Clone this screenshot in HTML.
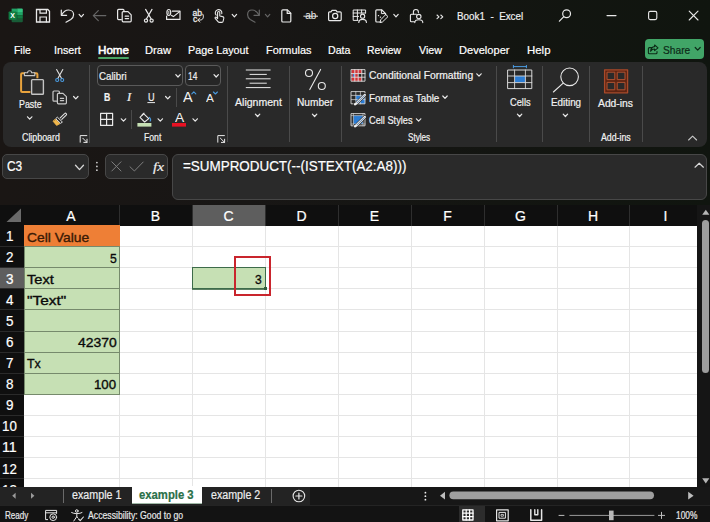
<!DOCTYPE html>
<html><head><meta charset="utf-8"><title>Book1 - Excel</title>
<style>
*{box-sizing:border-box;margin:0;padding:0}
html,body{width:710px;height:522px;overflow:hidden;background:#151515}
body{position:relative;font-family:"Liberation Sans",sans-serif;color:#fff;font-size:11px}
.abs,.t{position:absolute}
.t{white-space:nowrap;line-height:1;-webkit-text-stroke:0.2px currentColor}
svg{position:absolute;overflow:visible;left:0;top:0}
svg text{font-family:"Liberation Sans",sans-serif}
.sep{position:absolute;width:1px;background:#4a4a4a}
#grid{position:absolute;left:0;top:205px;width:697px;height:282px;background:#fff;overflow:hidden}
.ch{position:absolute;top:0;height:21px;color:#fff;font-size:14.5px;text-align:center;line-height:22px}
.rh{position:absolute;left:0;width:19px;color:#fff;font-size:14.5px;text-align:center;line-height:22px;height:21px}
.vl{position:absolute;top:20px;width:1px;height:270px;background:#e3e3e3}
.hl{position:absolute;left:24px;height:1px;width:680px;background:#e3e3e3}
.cell{position:absolute;font-size:14.5px;line-height:22px;color:#0a0a0a;padding:0 3px;white-space:nowrap}
.g{background:#c6e0b4;border:1px solid #93aa84}
.r{text-align:right}
</style></head><body>
<div class="abs" style="left:0;top:0;width:710px;height:205px;background:linear-gradient(90deg,#1a1614 0%,#181615 35%,#131511 70%,#10150f 100%)"></div>
<svg width="710" height="36" viewBox="0 0 710 36" fill="none" stroke="#e9e9e9" stroke-width="1.2" stroke-linecap="round" stroke-linejoin="round">
<g stroke="none">
<path d="M11.6,8.6 H17.2 V12 H11.6 Z" fill="#21a366"/><path d="M17.2,8.6 H21.8 a1,1 0 0 1 1,1 V12 H17.2 Z" fill="#33c481"/>
<rect x="11.6" y="12" width="5.6" height="3.4" fill="#107c41"/><rect x="17.2" y="12" width="5.6" height="3.4" fill="#21a366"/>
<rect x="11.6" y="15.4" width="5.6" height="3.4" fill="#185c37"/><rect x="17.2" y="15.4" width="5.6" height="3.4" fill="#107c41"/>
<path d="M11.6,18.8 H22.8 V21.2 a1,1 0 0 1 -1,1 H12.6 a1,1 0 0 1 -1,-1 Z" fill="#185c37"/>
<rect x="8.6" y="11.4" width="8" height="8.4" rx="0.8" fill="#107c41"/>
<text x="12.6" y="18.2" font-size="7" font-weight="bold" fill="#fff" text-anchor="middle">X</text></g>
<path d="M36.5,9.5 H47.8 L49.5,11.2 V22 H36.5 Z" stroke-width="1.3" stroke-linejoin="miter"/><path d="M40,9.5 V13.2 H46.4 V9.5 M40,22 V17 H46.4 V22" stroke-width="1.2" stroke-linejoin="miter"/>
<path d="M61.3,10 V15.3 H66.6"/><path d="M61.6,15 C63.2,12 65.6,10 68.6,10 C71.6,10 73.6,12.2 73.6,14.8 C73.6,17 72.4,18.4 70.8,19.4 L66,22.2"/>
<path d="M79.1,14.4 L81.3,16.8 L83.5,14.4" fill="none" stroke="#e9e9e9" stroke-width="1.2" stroke-linecap="round" stroke-linejoin="round"/>
<path d="M93.3,15.6 H105.8 M98.3,10.6 L93.3,15.6 L98.3,20.6" stroke="#666"/>
<path d="M121.3,19.6 H118.6 a1,1 0 0 1 -1,-1 V10.4 a1,1 0 0 1 1,-1 H123 a1,1 0 0 1 1,1 V11.4"/><path d="M122.2,12.6 a1,1 0 0 1 1,-1 H128 L131.2,14.8 V20.8 a1,1 0 0 1 -1,1 H123.2 a1,1 0 0 1 -1,-1 Z"/><path d="M125.2,16.2 H128.6 M125.2,18.6 H128.6"/>
<path d="M145.6,9.4 L151.2,19 M152,9.4 L146.4,19"/><circle cx="146" cy="20.6" r="1.6"/><circle cx="151.6" cy="20.6" r="1.6"/>
<path d="M172.4,11.2 H180 V19.4 H166.6 V16.2"/><path d="M171.6,15.4 L173.4,16.6 L179.6,11.6"/><ellipse cx="168.8" cy="12.5" rx="1.9" ry="3" stroke-width="1.2" fill="#171615"/><path d="M168.8,11.4 V13.8" stroke-width="0.9"/>
<text x="192.6" y="15.8" font-size="8.6" fill="#e9e9e9" stroke="#e9e9e9" stroke-width="0.3">ab</text><text x="193" y="21.6" font-size="8.6" fill="#e9e9e9" stroke="#e9e9e9" stroke-width="0.3">c</text>
<path d="M202.8,14.2 C204.2,17 203.2,20 200.2,20 H198 M199.8,18 L197.8,20 L199.8,22" stroke-width="1"/>
<path d="M216.2,15.2 a3.3,3.3 0 1 1 5.6,-1.6" stroke-width="1.1"/><path d="M217.6,18.6 V12.6 a1.1,1.1 0 0 1 2.2,0 V16 L222.6,16.6 a1.4,1.4 0 0 1 1.2,1.6 L223.2,21 a1.6,1.6 0 0 1 -1.6,1.4 H219.6 a2,2 0 0 1 -1.6,-0.8 L215.2,18.4 a0.9,0.9 0 0 1 1.4,-1.1 Z" stroke-width="1.1"/>
<path d="M232.2,14.4 L234.4,16.8 L236.6,14.4" fill="none" stroke="#e9e9e9" stroke-width="1.2" stroke-linecap="round" stroke-linejoin="round"/>
<path d="M259.3,10 V15.3 H254" stroke="#666"/><path d="M259,15 C257.4,12 255,10 252,10 C249,10 247.6,12.2 247.6,14.8 C247.6,17 248.6,18.4 250.2,19.4 L255,22.2" stroke="#666"/>
<path d="M265.4,14.4 L267.6,16.8 L269.8,14.4" fill="none" stroke="#666" stroke-width="1.2" stroke-linecap="round" stroke-linejoin="round"/>
<path d="M281.8,10.8 a1,1 0 0 1 1,-1 H287.4 L290.8,13.2 V21 a1,1 0 0 1 -1,1 H282.8 a1,1 0 0 1 -1,-1 Z"/><path d="M287.2,10 V13.4 H290.6"/>
<text x="305.2" y="19.4" font-size="10" fill="#e9e9e9" stroke="none">ab</text><path d="M303.8,16.2 H317.6" stroke-width="1"/>
<path d="M328.6,12.8 a1,1 0 0 1 1,-1 H331 L332,10.4 H336 L337,11.8 H340.2 a1,1 0 0 1 1,1 V19.6 a1,1 0 0 1 -1,1 H329.6 a1,1 0 0 1 -1,-1 Z"/><circle cx="335.2" cy="16" r="2.6"/>
<path d="M358,20.4 H353.2 V10 H365.6 V13 M353.2,13 H365.6 M353.2,16.4 H358.6 M357.4,10 V20.4 M361.6,10 V13" stroke-width="1"/><circle cx="362.6" cy="16.2" r="2.1" stroke-width="1.1"/><path d="M358.8,22.4 C358.8,20 360.4,19.4 362.6,19.4 C364.8,19.4 366.4,20 366.4,22.4" stroke-width="1.1"/>
<path d="M381,22 H376.8 a1,1 0 0 1 -1,-1 V10.8 a1,1 0 0 1 1,-1 H381.6 L385.6,13.6 V14.6"/><path d="M381.4,10 V13.6 H385.2" stroke-width="1"/><path d="M386,14.8 L388,16.6 L382.4,22 L380,22.6 L380.6,20.2 Z" stroke-width="1"/><path d="M378.4,15.6 h0.2 M380.4,17.2 h0.2" stroke-width="1.2"/>
<path d="M393.8,14.4 L396.0,16.8 L398.2,14.4" fill="none" stroke="#e9e9e9" stroke-width="1.2" stroke-linecap="round" stroke-linejoin="round"/>
<path d="M413.4,14.2 V12 a2.5,2.5 0 0 1 5,0 V12.6" stroke-width="1.1"/><path d="M414.6,21.8 H411.4 a1,1 0 0 1 -1,-1 V15.2 a1,1 0 0 1 1,-1 H416.4" stroke-width="1.1"/><circle cx="418.8" cy="16.6" r="2.2" stroke-width="1.1"/><path d="M414.8,22.6 C414.8,20.2 416.4,19.8 418.8,19.8 C421.2,19.8 422.8,20.2 422.8,22.6" stroke-width="1.1"/>
<path d="M437,15 L439,16.8 L437,18.6 M440.8,15 L442.8,16.8 L440.8,18.6" stroke-width="1.1"/>
<circle cx="566.6" cy="13.8" r="3.9"/><path d="M563.8,16.6 L559.4,21.2"/>
<path d="M607,15.6 H616" stroke-width="1.1"/><rect x="648.6" y="11.4" width="8.2" height="8.2" rx="1.6" stroke-width="1.1"/><path d="M689.2,11.2 L698,20 M698,11.2 L689.2,20" stroke-width="1.1"/>
</svg>
<div class="t" style="left:457.0px;top:11px;font-size:11.5px;color:#f0f0f0;transform:scaleX(0.856);transform-origin:0 0">Book1&nbsp; - &nbsp;Excel</div>
<div class="t" style="left:13.5px;top:45px;font-size:11.5px;color:#fff;transform:scaleX(0.907);transform-origin:0 0">File</div>
<div class="t" style="left:53.5px;top:45px;font-size:11.5px;color:#fff;transform:scaleX(0.932);transform-origin:0 0">Insert</div>
<div class="t" style="left:98.0px;top:45px;font-size:11.5px;color:#fff;transform:scaleX(1.010);transform-origin:0 0;-webkit-text-stroke:0.55px currentColor">Home</div>
<div class="t" style="left:145.0px;top:45px;font-size:11.5px;color:#fff;transform:scaleX(0.969);transform-origin:0 0">Draw</div>
<div class="t" style="left:187.5px;top:45px;font-size:11.5px;color:#fff;transform:scaleX(0.937);transform-origin:0 0">Page Layout</div>
<div class="t" style="left:265.5px;top:45px;font-size:11.5px;color:#fff;transform:scaleX(0.949);transform-origin:0 0">Formulas</div>
<div class="t" style="left:327.5px;top:45px;font-size:11.5px;color:#fff;transform:scaleX(0.926);transform-origin:0 0">Data</div>
<div class="t" style="left:367.0px;top:45px;font-size:11.5px;color:#fff;transform:scaleX(0.901);transform-origin:0 0">Review</div>
<div class="t" style="left:418.5px;top:45px;font-size:11.5px;color:#fff;transform:scaleX(0.930);transform-origin:0 0">View</div>
<div class="t" style="left:458.5px;top:45px;font-size:11.5px;color:#fff;transform:scaleX(0.963);transform-origin:0 0">Developer</div>
<div class="t" style="left:526.5px;top:45px;font-size:11.5px;color:#fff;transform:scaleX(0.993);transform-origin:0 0">Help</div>
<div class="abs" style="left:98px;top:57px;width:31px;height:2px;background:#4aa564;border-radius:1px"></div>
<div class="abs" style="left:645px;top:39px;width:59px;height:20px;background:#41a567;border-radius:4px"></div>
<svg width="710" height="64" viewBox="0 0 710 64" fill="none" stroke="#0c2a17" stroke-width="1.1" stroke-linecap="round" stroke-linejoin="round"><path d="M652,47.6 H649.4 a1,1 0 0 0 -1,1 V52.8 a1,1 0 0 0 1,1 H656 a1,1 0 0 0 1,-1 V51.6"/><path d="M654.6,45 L658,47.8 L654.6,50.6 V49 C652.6,49 651.4,49.8 650.6,51.2 C650.8,48.6 652.2,46.8 654.6,46.6 Z"/><path d="M695.2,47.5 L697.7,50.1 L700.2,47.5" fill="none" stroke="#0c2a17" stroke-width="1.2" stroke-linecap="round" stroke-linejoin="round"/>
</svg>
<div class="t" style="left:662.8px;top:45px;font-size:11.5px;color:#0c2a17;transform:scaleX(0.886);transform-origin:0 0">Share</div>
<div class="abs" style="left:3px;top:62px;width:704px;height:85px;background:#292929;border-radius:8px"></div>
<div class="sep" style="left:89.0px;top:65px;height:78px"></div>
<div class="sep" style="left:227.0px;top:66px;height:76px"></div>
<div class="sep" style="left:289.0px;top:66px;height:76px"></div>
<div class="sep" style="left:341.0px;top:66px;height:76px"></div>
<div class="sep" style="left:496.0px;top:66px;height:76px"></div>
<div class="sep" style="left:542.0px;top:66px;height:76px"></div>
<div class="sep" style="left:589.0px;top:66px;height:76px"></div>
<div class="sep" style="left:642.0px;top:66px;height:76px"></div>
<div class="sep" style="left:176px;top:88px;height:19px"></div>
<div class="sep" style="left:131px;top:110px;height:19px"></div>
<div class="abs" style="left:97px;top:65px;width:86px;height:21px;border:1px solid #5a5a5a;border-radius:4px;background:#262626"></div>
<div class="abs" style="left:184.5px;top:65px;width:36.5px;height:21px;border:1px solid #5a5a5a;border-radius:4px;background:#262626"></div>
<svg width="710" height="150" viewBox="0 0 710 150" fill="none" stroke="#e9e9e9" stroke-width="1.2" stroke-linecap="round" stroke-linejoin="round">
<path d="M26,73.2 H22.1 a1,1 0 0 0 -1,1 V91.1 a1,1 0 0 0 1,1 H30.4 M33.6,73.2 H36.4 a1,1 0 0 1 1,1 V78.2" stroke="#e8a33d" stroke-width="2" stroke-linecap="butt"/>
<path d="M24.4,75.6 V72.8 H27.6 a2,2 0 0 1 4,0 H34.8 V75.6 Z" stroke="#c8c8c8" stroke-width="1.1" fill="#292929"/>
<rect x="31.6" y="79.6" width="11.8" height="14.6" rx="0.8" stroke="#c4c4c4" stroke-width="1.4" fill="#303030"/>
<path d="M27.5,116.8 L29.7,119.1 L31.9,116.8" fill="none" stroke="#e9e9e9" stroke-width="1.2" stroke-linecap="round" stroke-linejoin="round"/>
<path d="M56.6,69.6 L61.6,78.4 M62.8,69.6 L57.8,78.4" stroke="#e0e0e0" stroke-width="1.1"/><circle cx="57.2" cy="80" r="1.5" stroke="#4a9be0" stroke-width="1.1"/><circle cx="62.2" cy="80" r="1.5" stroke="#4a9be0" stroke-width="1.1"/>
<path d="M56.6,101.2 H54 a1,1 0 0 1 -1,-1 V92 a1,1 0 0 1 1,-1 H58.4 a1,1 0 0 1 1,1 V93" stroke="#c8c8c8"/><path d="M57.4,94.4 a1,1 0 0 1 1,-1 H63 L66.4,96.6 V102.8 a1,1 0 0 1 -1,1 H58.4 a1,1 0 0 1 -1,-1 Z" stroke="#c8c8c8"/><path d="M60.4,98.4 H63.6 M60.4,100.6 H63.6" stroke="#c8c8c8"/>
<path d="M73.6,96.5 L75.8,98.9 L78.0,96.5" fill="none" stroke="#e9e9e9" stroke-width="1.2" stroke-linecap="round" stroke-linejoin="round"/>
<path d="M60.2,117.8 L64.6,113.6 a1.1,1.1 0 0 1 1.6,1.6 L61.8,119.4" stroke="#e0e0e0" stroke-width="1.1"/><path d="M57.6,117.4 L62.4,122 L60.6,123.4 L56,119 Z" stroke="#e0e0e0" stroke-width="1"/><path d="M55.4,119.4 L59.8,123.8 L56.6,125.4 L53.2,121.4 Z" fill="#f0b64a" stroke="#f0b64a" stroke-width="0.8"/>
<path d="M86.8,135.6 H80.2 V142.2" stroke-width="1"/><path d="M82.8,138.2 L87.0,142.4 M83.8,142.4 H87.0 V139.2" stroke-width="1"/>
<path d="M224.4,135.6 H217.8 V142.2" stroke-width="1"/><path d="M220.4,138.2 L224.60000000000002,142.4 M221.4,142.4 H224.60000000000002 V139.2" stroke-width="1"/>
<path d="M175.8,74.6 L178.0,77.0 L180.2,74.6" fill="none" stroke="#e9e9e9" stroke-width="1.2" stroke-linecap="round" stroke-linejoin="round"/>
<path d="M214.0,74.6 L216.2,77.0 L218.4,74.6" fill="none" stroke="#e9e9e9" stroke-width="1.2" stroke-linecap="round" stroke-linejoin="round"/>
<path d="M147.8,102.6 H154.6" stroke-width="1"/>
<path d="M165.6,96.5 L167.8,98.9 L170.0,96.5" fill="none" stroke="#e9e9e9" stroke-width="1.2" stroke-linecap="round" stroke-linejoin="round"/>
<path d="M191.8,93.8 L193.8,91.8 L195.8,93.8" stroke="#4a9be0" stroke-width="1.1"/><path d="M213.4,92 L215.4,94 L217.4,92" stroke="#4a9be0" stroke-width="1.1"/>
<rect x="100.6" y="113.4" width="12" height="12" stroke-width="1.2"/><path d="M106.6,113.4 V125.4 M100.6,119.4 H112.6" stroke-width="1.2"/>
<path d="M121.3,118.8 L123.5,121.1 L125.7,118.8" fill="none" stroke="#e9e9e9" stroke-width="1.2" stroke-linecap="round" stroke-linejoin="round"/>
<path d="M143.6,113.6 L148.8,118.6 L144.6,122 L140,117.4 Z" stroke-width="1.1"/><path d="M142.2,115 L144,113.2" stroke-width="1.1"/><path d="M149.4,117.4 C150.6,118.8 151,120 150.2,121 " stroke="#4a9be0" stroke-width="1.2"/>
<rect x="137.4" y="123" width="14" height="3.6" fill="#c6e0b4" stroke="none"/>
<path d="M158.1,118.8 L160.3,121.1 L162.5,118.8" fill="none" stroke="#e9e9e9" stroke-width="1.2" stroke-linecap="round" stroke-linejoin="round"/>
<rect x="172" y="123" width="14" height="3.6" fill="#e81123" stroke="none"/>
<path d="M193.0,118.8 L195.2,121.1 L197.4,118.8" fill="none" stroke="#e9e9e9" stroke-width="1.2" stroke-linecap="round" stroke-linejoin="round"/>
<path d="M246.2,70 H270.2 M250,74.4 H266.4 M246.2,78.8 H270.2 M250,83.2 H266.4 M246.2,87.6 H270.2" stroke-width="1"/>
<path d="M255.4,114.1 L257.6,116.5 L259.8,114.1" fill="none" stroke="#e9e9e9" stroke-width="1.2" stroke-linecap="round" stroke-linejoin="round"/>
<circle cx="309" cy="73" r="3.5" stroke-width="1.1"/><circle cx="321.8" cy="86" r="3.5" stroke-width="1.1"/><path d="M320.6,69.4 L309.8,89.6" stroke-width="1.1"/>
<path d="M312.4,114.1 L314.6,116.5 L316.8,114.1" fill="none" stroke="#e9e9e9" stroke-width="1.2" stroke-linecap="round" stroke-linejoin="round"/>
<rect x="351.4" y="69.6" width="10.4" height="11.6" fill="#d13438" stroke="none"/><rect x="358.2" y="73.6" width="3.6" height="3.4" fill="#222" stroke="none"/><rect x="352.79999999999995" y="73.6" width="2" height="3.4" fill="#3a78c9" stroke="none"/><rect x="351.4" y="69.6" width="13.6" height="11.6" stroke="#d8d8d8" stroke-width="0.9"/><path d="M354.79999999999995,69.6 V81.19999999999999 M358.2,69.6 V81.19999999999999 M361.79999999999995,69.6 V81.19999999999999 M351.4,73.6 H365.0 M351.4,77.19999999999999 H365.0" stroke="#e0e0e0" stroke-width="0.9"/>
<rect x="355.79999999999995" y="95.39999999999999" width="9.2" height="8.4" fill="#2b7cd3" stroke="none"/><rect x="351.4" y="91.6" width="13.6" height="12.2" stroke="#d8d8d8" stroke-width="0.9"/><path d="M355.79999999999995,91.6 V103.8 M360.4,91.6 V103.8 M351.4,95.39999999999999 H365.0 M351.4,99.6 H365.0" stroke="#d8d8d8" stroke-width="0.7"/><path d="M364.79999999999995,95.0 L356.59999999999997,103.19999999999999 L355.0,104.19999999999999" stroke="#2a2a2a" stroke-width="3.6"/><path d="M364.79999999999995,95.0 L356.59999999999997,103.19999999999999 L355.0,104.19999999999999" stroke="#f0f0f0" stroke-width="2.4"/><path d="M364.2,95.6 L357.0,102.8" stroke="#2d5f9a" stroke-width="0.8"/>
<rect x="353.4" y="115.6" width="9.6" height="8.4" fill="#2b7cd3" stroke="none"/><rect x="351.4" y="113.6" width="13.6" height="12.2" stroke="#d8d8d8" stroke-width="0.9"/><path d="M353.4,113.6 V125.8 M363.0,113.6 V125.8 M351.4,115.6 H365.0 M351.4,124.0 H365.0" stroke="#d8d8d8" stroke-width="0.6"/><path d="M364.79999999999995,117.0 L356.59999999999997,125.19999999999999 L355.0,126.19999999999999" stroke="#2a2a2a" stroke-width="3.6"/><path d="M364.79999999999995,117.0 L356.59999999999997,125.19999999999999 L355.0,126.19999999999999" stroke="#f0f0f0" stroke-width="2.4"/><path d="M364.2,117.6 L357.0,124.8" stroke="#2d5f9a" stroke-width="0.8"/>
<path d="M476.8,73.8 L479.0,76.2 L481.2,73.8" fill="none" stroke="#e9e9e9" stroke-width="1.2" stroke-linecap="round" stroke-linejoin="round"/>
<path d="M442.8,96.0 L445.0,98.4 L447.2,96.0" fill="none" stroke="#e9e9e9" stroke-width="1.2" stroke-linecap="round" stroke-linejoin="round"/>
<path d="M416.4,118.8 L418.6,121.1 L420.8,118.8" fill="none" stroke="#e9e9e9" stroke-width="1.2" stroke-linecap="round" stroke-linejoin="round"/>
<rect x="514.6" y="76" width="10.8" height="6.6" fill="#2b7cd3" stroke="none"/><rect x="508" y="70" width="23.8" height="18.6" stroke="#d8d8d8" stroke-width="1"/><path d="M514.6,70 V88.6 M525.4,70 V88.6 M508,76 H531.8 M508,82.6 H531.8" stroke="#d8d8d8" stroke-width="0.9"/><path d="M513.4,66.6 H526.4 M513.4,65.4 V67.8 M526.4,65.4 V67.8" stroke="#4a9be0" stroke-width="1"/>
<path d="M517.4,114.1 L519.6,116.5 L521.8,114.1" fill="none" stroke="#e9e9e9" stroke-width="1.2" stroke-linecap="round" stroke-linejoin="round"/>
<circle cx="569.6" cy="76.8" r="8.8" stroke-width="1.1"/><path d="M563.2,83.2 L553.4,92" stroke-width="1.1"/>
<path d="M563.2,114.1 L565.4,116.5 L567.6,114.1" fill="none" stroke="#e9e9e9" stroke-width="1.2" stroke-linecap="round" stroke-linejoin="round"/>
<rect x="604.6" y="69.8" width="23" height="23" fill="#5e2412" stroke="#a94a2a" stroke-width="1.3"/><rect x="607.4" y="72.2" width="7.4" height="7.4" fill="#2a2a2a" stroke="#b05332" stroke-width="1"/><rect x="607.4" y="82.4" width="7.4" height="7.4" fill="#2a2a2a" stroke="#b05332" stroke-width="1"/><rect x="617.6" y="72.2" width="7.4" height="7.4" fill="#2a2a2a" stroke="#b05332" stroke-width="1"/><rect x="617.6" y="82.4" width="7.4" height="7.4" fill="#2a2a2a" stroke="#b05332" stroke-width="1"/>
<path d="M688.6,140 L692.6,136.2 L696.6,140" stroke="#c8c8c8" stroke-width="1.1"/>
</svg>
<div class="t" style="left:18.5px;top:99px;font-size:10.5px;color:#f2f2f2;transform:scaleX(0.845);transform-origin:0 0">Paste</div><div class="t" style="left:21.7px;top:133px;font-size:10px;color:#f2f2f2;transform:scaleX(0.885);transform-origin:0 0">Clipboard</div><div class="t" style="left:99.0px;top:71px;font-size:10.5px;color:#f2f2f2;transform:scaleX(0.927);transform-origin:0 0">Calibri</div><div class="t" style="left:187.9px;top:71px;font-size:10.5px;color:#f2f2f2;transform:scaleX(0.796);transform-origin:0 0">14</div><div class="t" style="left:104.3px;top:92px;font-size:11.5px;color:#f2f2f2;font-weight:bold;transform:scaleX(0.758);transform-origin:0 0">B</div><div class="t" style="left:127.4px;top:92px;font-size:11.5px;color:#f2f2f2;font-style:italic;font-family:'Liberation Serif',serif;transform:scaleX(1.093);transform-origin:0 0">I</div><div class="t" style="left:147.8px;top:92px;font-size:11px;color:#f2f2f2;transform:scaleX(0.830);transform-origin:0 0">U</div><div class="t" style="left:182.7px;top:90px;font-size:14.5px;color:#f2f2f2;transform:scaleX(0.993);transform-origin:0 0;-webkit-text-stroke:0">A</div><div class="t" style="left:206.3px;top:93px;font-size:11.5px;color:#f2f2f2;transform:scaleX(1.030);transform-origin:0 0;-webkit-text-stroke:0">A</div><div class="t" style="left:174.8px;top:112px;font-size:12.5px;color:#f2f2f2;transform:scaleX(1.103);transform-origin:0 0;-webkit-text-stroke:0">A</div><div class="t" style="left:143.5px;top:133px;font-size:10px;color:#f2f2f2;transform:scaleX(0.864);transform-origin:0 0">Font</div><div class="t" style="left:234.6px;top:98px;font-size:10.2px;color:#f2f2f2;transform:scaleX(1.035);transform-origin:0 0">Alignment</div><div class="t" style="left:296.9px;top:98px;font-size:10.2px;color:#f2f2f2;transform:scaleX(0.996);transform-origin:0 0">Number</div><div class="t" style="left:368.9px;top:71px;font-size:10.2px;color:#f2f2f2;transform:scaleX(1.016);transform-origin:0 0">Conditional Formatting</div><div class="t" style="left:368.9px;top:94px;font-size:10.2px;color:#f2f2f2;transform:scaleX(0.965);transform-origin:0 0">Format as Table</div><div class="t" style="left:368.9px;top:116px;font-size:10.2px;color:#f2f2f2;transform:scaleX(0.906);transform-origin:0 0">Cell Styles</div><div class="t" style="left:407.6px;top:133px;font-size:10px;color:#f2f2f2;transform:scaleX(0.815);transform-origin:0 0">Styles</div><div class="t" style="left:509.5px;top:98px;font-size:10.2px;color:#f2f2f2;transform:scaleX(0.909);transform-origin:0 0">Cells</div><div class="t" style="left:550.7px;top:98px;font-size:10.2px;color:#f2f2f2;transform:scaleX(0.966);transform-origin:0 0">Editing</div><div class="t" style="left:598.4px;top:99px;font-size:10.2px;color:#f2f2f2;transform:scaleX(1.013);transform-origin:0 0">Add-ins</div><div class="t" style="left:600.9px;top:133px;font-size:10px;color:#f2f2f2;transform:scaleX(0.876);transform-origin:0 0">Add-ins</div>
<div class="abs" style="left:2px;top:154px;width:87px;height:25px;background:#2a2a2a;border:1px solid #474747;border-radius:5px"></div>
<div class="abs" style="left:105px;top:154px;width:63px;height:25px;background:#2a2a2a;border:1px solid #474747;border-radius:5px"></div>
<div class="abs" style="left:172px;top:154px;width:535px;height:46px;background:#2a2a2a;border:1px solid #474747;border-radius:6px"></div>
<svg width="710" height="205" viewBox="0 0 710 205" fill="none" stroke="#e9e9e9" stroke-width="1.2" stroke-linecap="round" stroke-linejoin="round">
<path d="M75.5,165.2 L79.5,169.6 L83.5,165.2" fill="none" stroke="#d8d8d8" stroke-width="1.3" stroke-linecap="round" stroke-linejoin="round"/>
<circle cx="96.9" cy="162.6" r="0.9" fill="#ccc" stroke="none"/><circle cx="96.9" cy="166.4" r="0.9" fill="#ccc" stroke="none"/><circle cx="96.9" cy="170.2" r="0.9" fill="#ccc" stroke="none"/>
<path d="M111.8,161.8 L121,171 M121,161.8 L111.8,171" stroke="#7d7d7d" stroke-width="1"/><path d="M130,166.8 L134.4,171 L143.2,162" stroke="#7d7d7d" stroke-width="1"/>
<path d="M695,167.2 L699.2,163.2 L703.4,167.2" stroke="#d8d8d8" stroke-width="1.2"/>
</svg>
<div class="t" style="left:6.8px;top:159px;font-size:14px;color:#fff;transform:scaleX(0.849);transform-origin:0 0">C3</div><div class="t" style="left:152.5px;top:160px;font-size:13.5px;color:#f0f0f0;font-style:italic;font-family:'Liberation Serif',serif;transform:scaleX(1.128);transform-origin:0 0">fx</div><div class="t" style="left:182.5px;top:159px;font-size:14px;color:#fff;transform:scaleX(0.959);transform-origin:0 0">=SUMPRODUCT(--(ISTEXT(A2:A8)))</div>
<div class="abs" style="left:0;top:205px;width:697px;height:282px;background:#fff"></div>
<div class="abs" style="left:0;top:205px;width:697px;height:21px;background:#0f0f0f"></div>
<div class="abs" style="left:0;top:205px;width:24px;height:282px;background:#0f0f0f"></div>
<div class="abs" style="left:193px;top:205px;width:72px;height:21px;background:#5e5e5e"></div>
<div class="abs" style="left:0;top:268px;width:24px;height:21px;background:#5e5e5e"></div>
<div class="abs" style="left:119px;top:205px;width:1px;height:21px;background:#2e2e2e"></div>
<div class="abs" style="left:119px;top:226px;width:1px;height:261px;background:#e5e5e5"></div>
<div class="abs" style="left:192px;top:205px;width:1px;height:21px;background:#2e2e2e"></div>
<div class="abs" style="left:192px;top:226px;width:1px;height:261px;background:#e5e5e5"></div>
<div class="abs" style="left:265px;top:205px;width:1px;height:21px;background:#2e2e2e"></div>
<div class="abs" style="left:265px;top:226px;width:1px;height:261px;background:#e5e5e5"></div>
<div class="abs" style="left:338px;top:205px;width:1px;height:21px;background:#2e2e2e"></div>
<div class="abs" style="left:338px;top:226px;width:1px;height:261px;background:#e5e5e5"></div>
<div class="abs" style="left:411px;top:205px;width:1px;height:21px;background:#2e2e2e"></div>
<div class="abs" style="left:411px;top:226px;width:1px;height:261px;background:#e5e5e5"></div>
<div class="abs" style="left:484px;top:205px;width:1px;height:21px;background:#2e2e2e"></div>
<div class="abs" style="left:484px;top:226px;width:1px;height:261px;background:#e5e5e5"></div>
<div class="abs" style="left:557px;top:205px;width:1px;height:21px;background:#2e2e2e"></div>
<div class="abs" style="left:557px;top:226px;width:1px;height:261px;background:#e5e5e5"></div>
<div class="abs" style="left:629px;top:205px;width:1px;height:21px;background:#2e2e2e"></div>
<div class="abs" style="left:629px;top:226px;width:1px;height:261px;background:#e5e5e5"></div>
<div class="abs" style="left:24px;top:246px;width:673px;height:1px;background:#e5e5e5"></div>
<div class="abs" style="left:0;top:246px;width:24px;height:1px;background:#2a2a2a"></div>
<div class="abs" style="left:24px;top:267px;width:673px;height:1px;background:#e5e5e5"></div>
<div class="abs" style="left:0;top:267px;width:24px;height:1px;background:#2a2a2a"></div>
<div class="abs" style="left:24px;top:288px;width:673px;height:1px;background:#e5e5e5"></div>
<div class="abs" style="left:0;top:288px;width:24px;height:1px;background:#2a2a2a"></div>
<div class="abs" style="left:24px;top:309px;width:673px;height:1px;background:#e5e5e5"></div>
<div class="abs" style="left:0;top:309px;width:24px;height:1px;background:#2a2a2a"></div>
<div class="abs" style="left:24px;top:331px;width:673px;height:1px;background:#e5e5e5"></div>
<div class="abs" style="left:0;top:331px;width:24px;height:1px;background:#2a2a2a"></div>
<div class="abs" style="left:24px;top:352px;width:673px;height:1px;background:#e5e5e5"></div>
<div class="abs" style="left:0;top:352px;width:24px;height:1px;background:#2a2a2a"></div>
<div class="abs" style="left:24px;top:373px;width:673px;height:1px;background:#e5e5e5"></div>
<div class="abs" style="left:0;top:373px;width:24px;height:1px;background:#2a2a2a"></div>
<div class="abs" style="left:24px;top:394px;width:673px;height:1px;background:#e5e5e5"></div>
<div class="abs" style="left:0;top:394px;width:24px;height:1px;background:#2a2a2a"></div>
<div class="abs" style="left:24px;top:415px;width:673px;height:1px;background:#e5e5e5"></div>
<div class="abs" style="left:0;top:415px;width:24px;height:1px;background:#2a2a2a"></div>
<div class="abs" style="left:24px;top:436px;width:673px;height:1px;background:#e5e5e5"></div>
<div class="abs" style="left:0;top:436px;width:24px;height:1px;background:#2a2a2a"></div>
<div class="abs" style="left:24px;top:457px;width:673px;height:1px;background:#e5e5e5"></div>
<div class="abs" style="left:0;top:457px;width:24px;height:1px;background:#2a2a2a"></div>
<div class="abs" style="left:24px;top:478px;width:673px;height:1px;background:#e5e5e5"></div>
<div class="abs" style="left:0;top:478px;width:24px;height:1px;background:#2a2a2a"></div>
<div class="abs" style="left:24px;top:499px;width:673px;height:1px;background:#e5e5e5"></div>
<div class="abs" style="left:0;top:499px;width:24px;height:1px;background:#2a2a2a"></div>
<div class="t" style="left:23px;width:96px;top:206px;height:20px;line-height:21px;font-size:14px;text-align:center">A</div>
<div class="t" style="left:119px;width:73px;top:206px;height:20px;line-height:21px;font-size:14px;text-align:center">B</div>
<div class="t" style="left:192px;width:73px;top:206px;height:20px;line-height:21px;font-size:14px;text-align:center">C</div>
<div class="t" style="left:265px;width:73px;top:206px;height:20px;line-height:21px;font-size:14px;text-align:center">D</div>
<div class="t" style="left:338px;width:73px;top:206px;height:20px;line-height:21px;font-size:14px;text-align:center">E</div>
<div class="t" style="left:411px;width:73px;top:206px;height:20px;line-height:21px;font-size:14px;text-align:center">F</div>
<div class="t" style="left:484px;width:73px;top:206px;height:20px;line-height:21px;font-size:14px;text-align:center">G</div>
<div class="t" style="left:557px;width:72px;top:206px;height:20px;line-height:21px;font-size:14px;text-align:center">H</div>
<div class="t" style="left:629px;width:73px;top:206px;height:20px;line-height:21px;font-size:14px;text-align:center">I</div>
<div class="t" style="left:5.8px;top:229px;font-size:14px;color:#fff;transform:scaleX(0.962);transform-origin:0 0">1</div><div class="t" style="left:5.8px;top:250px;font-size:14px;color:#fff;transform:scaleX(0.962);transform-origin:0 0">2</div><div class="t" style="left:5.8px;top:272px;font-size:14px;color:#fff;transform:scaleX(0.962);transform-origin:0 0">3</div><div class="t" style="left:5.8px;top:293px;font-size:14px;color:#fff;transform:scaleX(0.962);transform-origin:0 0">4</div><div class="t" style="left:5.8px;top:314px;font-size:14px;color:#fff;transform:scaleX(0.962);transform-origin:0 0">5</div><div class="t" style="left:5.8px;top:335px;font-size:14px;color:#fff;transform:scaleX(0.962);transform-origin:0 0">6</div><div class="t" style="left:5.8px;top:356px;font-size:14px;color:#fff;transform:scaleX(0.962);transform-origin:0 0">7</div><div class="t" style="left:5.8px;top:377px;font-size:14px;color:#fff;transform:scaleX(0.962);transform-origin:0 0">8</div><div class="t" style="left:5.8px;top:398px;font-size:14px;color:#fff;transform:scaleX(0.962);transform-origin:0 0">9</div><div class="t" style="left:2.2px;top:419px;font-size:14px;color:#fff;transform:scaleX(0.950);transform-origin:0 0">10</div><div class="t" style="left:2.2px;top:440px;font-size:14px;color:#fff;transform:scaleX(1.017);transform-origin:0 0">11</div><div class="t" style="left:2.2px;top:462px;font-size:14px;color:#fff;transform:scaleX(0.950);transform-origin:0 0">12</div><div class="t" style="left:2.2px;top:483px;font-size:14px;color:#fff;transform:scaleX(0.950);transform-origin:0 0">13</div><svg width="30" height="230" viewBox="0 0 30 230"><polygon points="21,208.5 21,222 6.5,222" fill="#6a6a6a"/></svg>
<div class="abs" style="left:24px;top:225px;width:96px;height:22px;background:#ee7f36;border:1px solid #ee7f36"></div>
<div class="abs" style="left:24px;top:246px;width:96px;height:22px;background:#c6e0b4;border:1px solid #768a6c"></div>
<div class="abs" style="left:24px;top:267px;width:96px;height:22px;background:#c6e0b4;border:1px solid #768a6c"></div>
<div class="abs" style="left:24px;top:288px;width:96px;height:22px;background:#c6e0b4;border:1px solid #768a6c"></div>
<div class="abs" style="left:24px;top:309px;width:96px;height:23px;background:#c6e0b4;border:1px solid #768a6c"></div>
<div class="abs" style="left:24px;top:331px;width:96px;height:22px;background:#c6e0b4;border:1px solid #768a6c"></div>
<div class="abs" style="left:24px;top:352px;width:96px;height:22px;background:#c6e0b4;border:1px solid #768a6c"></div>
<div class="abs" style="left:24px;top:373px;width:96px;height:22px;background:#c6e0b4;border:1px solid #768a6c"></div>
<div class="abs" style="left:192px;top:267px;width:74px;height:22px;background:#c6e0b4;border:1px solid #3d6b4a"></div>
<div class="abs" style="left:192px;top:289px;width:74px;height:1px;background:#5d8063"></div>
<div class="abs" style="left:264px;top:287px;width:3px;height:3px;background:#2f5d3c"></div>
<div class="abs" style="left:234px;top:256px;width:37px;height:40px;border:2px solid #c9252d"></div>
<div class="t" style="left:27.0px;top:231px;font-size:13.3px;color:#3b1a05;transform:scaleX(1.043);transform-origin:0 0;-webkit-text-stroke:0.35px currentColor">Cell Value</div><div class="t" style="left:109.6px;top:252px;font-size:13.3px;color:#0a0a0a;transform:scaleX(0.918);transform-origin:0 0;-webkit-text-stroke:0.35px currentColor">5</div><div class="t" style="left:27.2px;top:273px;font-size:13.3px;color:#0a0a0a;transform:scaleX(1.099);transform-origin:0 0;-webkit-text-stroke:0.35px currentColor">Text</div><div class="t" style="left:27.0px;top:294px;font-size:13.3px;color:#0a0a0a;transform:scaleX(1.159);transform-origin:0 0;-webkit-text-stroke:0.35px currentColor">&quot;Text&quot;</div><div class="t" style="left:77.6px;top:336px;font-size:13.3px;color:#0a0a0a;transform:scaleX(1.049);transform-origin:0 0;-webkit-text-stroke:0.35px currentColor">42370</div><div class="t" style="left:27.2px;top:357px;font-size:13.3px;color:#0a0a0a;transform:scaleX(0.934);transform-origin:0 0;-webkit-text-stroke:0.35px currentColor">Tx</div><div class="t" style="left:94.2px;top:378px;font-size:13.3px;color:#0a0a0a;transform:scaleX(0.996);transform-origin:0 0;-webkit-text-stroke:0.35px currentColor">100</div><div class="t" style="left:255.4px;top:273px;font-size:13.3px;color:#0a0a0a;transform:scaleX(0.905);transform-origin:0 0;-webkit-text-stroke:0.35px currentColor">3</div>
<div class="abs" style="left:697px;top:205px;width:13px;height:282px;background:#151515"></div>
<div class="abs" style="left:702px;top:220px;width:7px;height:153px;background:#9d9d9d;border-radius:3.5px"></div>
<svg width="710" height="490" viewBox="0 0 710 490"><polygon points="702.2,214.8 709.4,214.8 705.8,209.8" fill="#b5b5b5"/><polygon points="702.2,478.2 709.4,478.2 705.8,483.6" fill="#b5b5b5"/></svg>
<div class="abs" style="left:0;top:487px;width:710px;height:19px;background:#171717"></div>
<div class="abs" style="left:0;top:487px;width:310px;height:18px;background:#232323"></div>
<div class="abs" style="left:132px;top:486px;width:70px;height:18px;background:#fff;border-bottom:1px solid #9fb8a6"></div>
<div class="abs" style="left:62.5px;top:489px;width:1px;height:14px;background:#6a6a6a"></div>
<div class="abs" style="left:270.5px;top:489px;width:1px;height:14px;background:#6a6a6a"></div>
<svg width="710" height="522" viewBox="0 0 710 522" fill="none" stroke-linecap="round" stroke-linejoin="round"><polygon points="15.6,492.8 15.6,498.8 12.2,495.8" fill="#9a9a9a"/><polygon points="31,492.8 31,498.8 34.4,495.8" fill="#9a9a9a"/><circle cx="298.9" cy="496" r="5.8" stroke="#e6e6e6" stroke-width="1.1"/><path d="M295.9,496 H301.9 M298.9,493 V499" stroke="#e6e6e6" stroke-width="1.2"/><circle cx="425.4" cy="492.7" r="0.9" fill="#eee"/><circle cx="425.4" cy="496.2" r="0.9" fill="#eee"/><circle cx="425.4" cy="499.7" r="0.9" fill="#eee"/><polygon points="445,491.8 445,499.6 440,495.7" fill="#bdbdbd"/><polygon points="688.2,491.8 688.2,499.6 693.6,495.7" fill="#bdbdbd"/><rect x="449.4" y="491.4" width="204.6" height="7.8" rx="3.9" fill="#9f9f9f"/></svg>
<div class="t" style="left:71.8px;top:489px;font-size:12px;color:#ededed;transform:scaleX(0.892);transform-origin:0 0">example 1</div><div class="t" style="left:139.2px;top:489px;font-size:12px;color:#2a7048;font-weight:bold;transform:scaleX(0.941);transform-origin:0 0">example 3</div><div class="t" style="left:210.7px;top:489px;font-size:12px;color:#ededed;transform:scaleX(0.890);transform-origin:0 0">example 2</div>
<div class="abs" style="left:0;top:505px;width:710px;height:17px;background:#131313;border-top:1px solid #242424"></div>
<div class="abs" style="left:459px;top:506px;width:25.5px;height:16px;background:#2c2c2c"></div>
<svg width="710" height="522" viewBox="0 0 710 522" fill="none" stroke="#e6e6e6" stroke-width="1" stroke-linecap="round" stroke-linejoin="round"><path d="M47.6,519.6 H45.6 V510.4 H56.6 V513.4 M45.6,512.8 H56.6"/><circle cx="53.2" cy="517.2" r="3.4"/><circle cx="53.2" cy="517.2" r="1.2"/><circle cx="76.8" cy="511" r="1.3"/><path d="M71.6,512.6 C73.6,514 80,514 82,512.6 M76.8,513.6 V516.6 L73.8,521 M76.8,516.6 L77.6,517.8"/><path d="M78.6,519 L80.2,520.6 L83.4,517" stroke-width="1.1"/><rect x="462.8" y="509.8" width="10.2" height="10.2" stroke-width="1.3" stroke="#fff"/><path d="M466.2,509.8 V520 M469.6,509.8 V520 M462.8,513.2 H473 M462.8,516.6 H473" stroke-width="1.2" stroke="#fff"/><rect x="496.6" y="509.8" width="11.6" height="11" stroke-width="1.2"/><rect x="499.4" y="512.4" width="6" height="5.8" stroke-width="1"/><rect x="501.4" y="514.4" width="2" height="1.8" stroke-width="0.8"/><path d="M530.8,509.8 V520.2 H541.6 V509.8" stroke-width="1.5"/><path d="M534.8,509.8 V514.8 H537.8 V509.8" stroke-width="1.4"/><path d="M559,515.4 H564" stroke="#bdbdbd"/><path d="M569.8,515.4 H654" stroke="#9a9a9a"/><rect x="609" y="510.6" width="4.6" height="9.6" fill="#b8b8b8" stroke="none"/><path d="M658.4,515.4 H664.6 M661.5,512.3 V518.5" stroke="#bdbdbd"/></svg>
<div class="t" style="left:5.0px;top:511px;font-size:10.2px;color:#e8e8e8;transform:scaleX(0.794);transform-origin:0 0">Ready</div><div class="t" style="left:87.5px;top:511px;font-size:10.2px;color:#e8e8e8;transform:scaleX(0.852);transform-origin:0 0">Accessibility: Good to go</div><div class="t" style="left:676.3px;top:511px;font-size:10.2px;color:#e8e8e8;transform:scaleX(0.821);transform-origin:0 0">100%</div>
</body></html>
